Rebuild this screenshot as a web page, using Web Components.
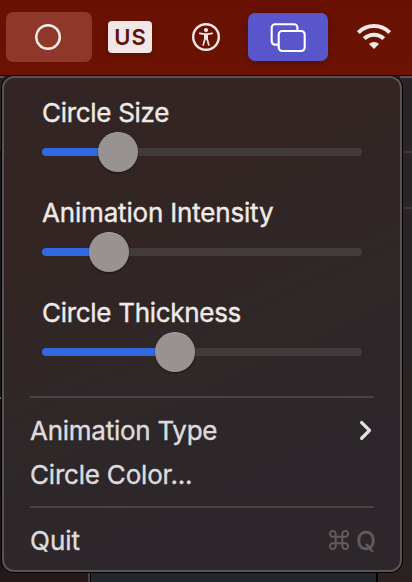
<!DOCTYPE html>
<html lang="en"><head><meta charset="utf-8"><title>Menu</title>
<style>
html,body{margin:0;height:100%;overflow:hidden}
body{font-family:Inter,"Liberation Sans",sans-serif;background:#2a2223}
</style></head><body>
<desktop-scene></desktop-scene>
<script>
const define = (name, html, setup) => customElements.define(name, class extends HTMLElement {
  connectedCallback() {
    if (this.shadowRoot) return;
    this.attachShadow({mode: "open"}).innerHTML = html;
    if (setup) setup(this);
  }
});

define("status-item", `<style>
:host{display:flex;align-items:center;justify-content:center;flex:none;box-sizing:border-box;border-radius:7px;color:#f2e8e6}
</style><slot></slot>`);

define("menu-bar", `<style>
:host{display:flex;height:75px;box-sizing:border-box;padding:12px 0 0 6px;align-items:flex-start;background:linear-gradient(#681102,#6c1303)}
.circle{width:86px;height:50px;background:#8f3729}
.input{width:44px;height:32px;margin:9px 0 0 16px;border-radius:4px;background:#f1e7e6;box-shadow:0 2px 4px #0003;color:#5f1308;font-size:22px;font-weight:600;letter-spacing:.9px;text-indent:1px}
.access{width:28px;height:50px;margin-left:40px}
.windows{width:80px;height:48px;margin:1px 0 0 28px;background:#5956cc;box-shadow:0 2px 7px #0004}
.wifi{width:36px;height:50px;margin-left:28px}
svg{display:block;flex:none}
</style>
<status-item class="circle"><svg width="28" height="28" viewBox="0 0 28 28"><circle cx="13" cy="14" r="11.8" fill="none" stroke="#f6eae8" stroke-width="2.5"/></svg></status-item>
<status-item class="input">US</status-item>
<status-item class="access"><svg width="28" height="28" viewBox="0 0 28 28"><circle cx="14" cy="14" r="12.8" fill="none" stroke="#f2e8e6" stroke-width="2.4"/><circle cx="14" cy="7.1" r="2.1" fill="#f2e8e6"/><path d="M7.8 10.3L12.4 11.2h3.2L20.2 10.3M12.9 11.8V16L11.2 22M15.1 11.8V16L16.8 22" fill="none" stroke="#f2e8e6" stroke-width="1.7" stroke-linecap="round" stroke-linejoin="round"/><path d="M12.1 11h3.8v4.8l-1.1.8h-1.6l-1.1-.8z" fill="#f2e8e6"/></svg></status-item>
<status-item class="windows"><svg width="36" height="30" viewBox="0 0 36 30"><path d="M8.7 22.6H5a3.3 3.3 0 0 1-3.3-3.3V5.6A3.3 3.3 0 0 1 5 2.3h19.1a3.3 3.3 0 0 1 3.3 3.3V9" fill="none" stroke="#fff" stroke-width="2.1"/><rect x="8.7" y="9" width="26" height="20" rx="3.5" fill="none" stroke="#fff" stroke-width="2.1"/></svg></status-item>
<status-item class="wifi"><svg width="36" height="28" viewBox="0 0 36 28"><g fill="none" stroke="#f2e8e6" stroke-width="4"><path d="M2.3 9.7a22 22 0 0 1 31.4 0"/><path d="M8.2 15.7a13.9 13.9 0 0 1 19.6 0"/></g><path d="M18 26l-5-5a7.1 7.1 0 0 1 10 0z" fill="#f2e8e6"/></svg></status-item>`);

define("range-slider", `<style>
:host{display:block;height:100px;color:#edeae9}
.label{height:32px;line-height:32px;font-size:26px;white-space:nowrap}
.label span{display:inline-block}
.control{display:grid;align-items:center;height:40px;margin-top:3px}
.track,.knob{grid-area:1/1}
.track{height:8px;border-radius:4px;background:linear-gradient(90deg,#3069e0 var(--at),#433a3a var(--at))}
.knob{width:40px;height:40px;box-sizing:border-box;border-radius:50%;margin-left:calc(var(--at) - 20px);background:#989292;border-top:1px solid #aaa5a5;box-shadow:0 1px 2px #0007}
</style><div class="label"><span><slot></slot></span></div><div class="control"><div class="track"></div><div class="knob"></div></div>`,
el => el.style.setProperty("--at", el.getAttribute("position") + "px"));

define("menu-row", `<style>
:host{display:flex;justify-content:space-between;align-items:center;height:44px;font-size:26px;color:#dddbdc;white-space:nowrap}
</style><span><slot></slot></span><slot name="end"></slot>`);

define("menu-divider", `<style>:host{display:block;height:2px;background:#494445}</style>`);

define("drop-menu", `<style>
:host{display:block;box-sizing:border-box;width:400px;height:496px;border:2px solid #5b5353;border-radius:12px;box-shadow:0 0 0 1px #000;padding:19px 26px 0;
font-weight:400;-webkit-text-stroke:.4px currentColor;
background:linear-gradient(155deg,#332525 0,#322524 30%,#2f2728 55%,#2d272b 75%,#2d272b 100%) padding-box}
.sliders{padding:0 12px}
menu-divider.first{margin-top:-1px;margin-bottom:10px}
menu-divider.second{margin:10px 0}
.key{display:flex;align-items:center;color:#625c5e;gap:7px;margin-right:-2px}
svg{display:block}
</style>
<div class="sliders">
<range-slider position="76" style="letter-spacing:-.3px">Circle Size</range-slider>
<range-slider position="67" style="letter-spacing:-.18px">Animation Intensity</range-slider>
<range-slider position="133" style="letter-spacing:-.3px">Circle Thickness</range-slider>
</div>
<menu-divider class="first"></menu-divider>
<menu-row style="letter-spacing:-.26px">Animation Type<svg slot="end" width="16" height="22" viewBox="0 0 16 22"><path d="M3.7 3.6l7.8 7.8-7.8 7.8" fill="none" stroke="#e2e0e1" stroke-width="3.4" stroke-linecap="round" stroke-linejoin="round"/></svg></menu-row>
<menu-row style="letter-spacing:-.2px">Circle Color...</menu-row>
<menu-divider class="second"></menu-divider>
<menu-row>Quit<span class="key" slot="end"><svg width="20" height="20" viewBox="0 0 20 20"><path d="M6.7 6.7h6.6v6.6H6.7zM6.7 6.7H4A2.9 2.9 0 1 1 6.7 4zM13.3 6.7V4A2.9 2.9 0 1 1 16 6.7zM13.3 13.3H16A2.9 2.9 0 1 1 13.3 16zM6.7 13.3V16A2.9 2.9 0 1 1 4 13.3z" fill="none" stroke="#625c5e" stroke-width="1.9"/></svg>Q</span></menu-row>`);

define("desktop-scene", `<style>
:host{display:block;height:582px;overflow:hidden;background:#2a2223}
.stage{display:flex;height:507px;box-sizing:border-box;padding:1px 0 0 2px;
background:
linear-gradient(90deg,#251a19 0 88px,#47413f 88px 90px,#000 90px 91px,#22252b 91px 376px,#000 376px 378px,#2b2120 378px) 0 100%/100% 10px no-repeat,
linear-gradient(#000 0 1px,#5a5150 1px 3px,transparent 3px 76px,#403838 76px 78px,transparent 78px 132px,#403838 132px 134px,transparent 134px) 100% 0/12px 100% no-repeat,
linear-gradient(#000 0 1px,#5a5150 1px 3px,#2a2122 3px 76px,#000 76px 78px,#17161a 78px 322px,#77777a 322px 324px,#111 324px 422px,#1d1717 422px) 0 0/4px 100% no-repeat,
linear-gradient(#000 0 1px,#2b2425 1px,#2a2322)}
</style><menu-bar></menu-bar><div class="stage"><drop-menu></drop-menu></div>`);
</script></body></html>
